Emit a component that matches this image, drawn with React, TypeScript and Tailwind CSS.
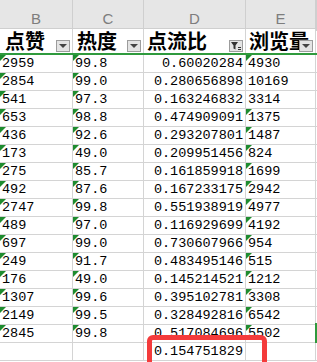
const rows: { b: string; c: string; d: string; e: string; eMark: boolean }[] = [
  { b: "2959", c: "99.8", d: "0.60020284", e: "4930", eMark: true },
  { b: "2854", c: "99.0", d: "0.280656898", e: "10169", eMark: false },
  { b: "541", c: "97.3", d: "0.163246832", e: "3314", eMark: false },
  { b: "653", c: "98.8", d: "0.474909091", e: "1375", eMark: true },
  { b: "436", c: "92.6", d: "0.293207801", e: "1487", eMark: true },
  { b: "173", c: "49.0", d: "0.209951456", e: "824", eMark: true },
  { b: "275", c: "85.7", d: "0.161859918", e: "1699", eMark: true },
  { b: "492", c: "87.6", d: "0.167233175", e: "2942", eMark: true },
  { b: "2747", c: "99.8", d: "0.551938919", e: "4977", eMark: true },
  { b: "489", c: "97.0", d: "0.116929699", e: "4192", eMark: true },
  { b: "697", c: "99.0", d: "0.730607966", e: "954", eMark: true },
  { b: "249", c: "91.7", d: "0.483495146", e: "515", eMark: true },
  { b: "176", c: "49.0", d: "0.145214521", e: "1212", eMark: true },
  { b: "1307", c: "99.6", d: "0.395102781", e: "3308", eMark: true },
  { b: "2149", c: "99.5", d: "0.328492816", e: "6542", eMark: true },
  { b: "2845", c: "99.8", d: "0.517084696", e: "5502", eMark: true },
];

const grid = "grid grid-cols-[73px_71px_102px_70px_1fr]";
const cell = "relative border-r border-[#d4d4d4] overflow-hidden whitespace-nowrap";
const head = "relative border-r border-[#d4d4d4] whitespace-nowrap flex items-center";
const mono = { fontFamily: '"Liberation Mono", "DejaVu Sans Mono", monospace' };

function Mark() {
  return (
    <span className="absolute left-0 top-0 w-0 h-0 border-t-[6px] border-r-[6px] border-t-[#1e8c2f] border-r-transparent" />
  );
}

function DropBtn() {
  return (
    <span className="absolute right-[2px] bottom-[1px] w-[14px] h-[12px] border border-[#9c9c9c] bg-[#e4e4e4] flex items-center justify-center">
      <span className="w-0 h-0 border-l-[4px] border-r-[4px] border-t-[4px] border-l-transparent border-r-transparent border-t-[#444]" />
    </span>
  );
}

function FilterBtn() {
  return (
    <span className="absolute right-[2px] bottom-[1px] w-[14px] h-[12px] border border-[#9c9c9c] bg-[#e4e4e4] flex items-center justify-center">
      <svg width="12" height="10" viewBox="0 0 12 10">
        <path d="M1 1h7L5.5 4.5V8.5L3.5 7.5V4.5Z" fill="#333" />
        <rect x="8" y="6" width="3" height="1" fill="#333" />
        <rect x="8" y="8" width="3" height="1" fill="#333" />
      </svg>
    </span>
  );
}

export default function App() {
  const cn = "font-semibold text-[20px] leading-[24px] text-black";
  const cjk = { fontFamily: '"Noto Sans CJK SC", "Noto Sans", sans-serif' };
  return (
    <div className="relative w-[317px] h-[362px] overflow-hidden bg-white">
      {/* column letters */}
      <div className={`${grid} h-[29px] bg-[#e6e6e6] border-b border-[#cfcfcf]`}>
        {["B", "C", "D", "E", ""].map((l, i) => (
          <div
            key={i}
            className="border-r border-[#cfcfcf] flex items-center justify-center pt-[8px] text-[15px] text-[#7d7d7d]"
            style={{ fontFamily: '"Liberation Sans", Arial, sans-serif' }}
          >
            {l}
          </div>
        ))}
      </div>

      {/* field header */}
      <div className={`${grid} h-[26px] border-b-2 border-[#2f9a3d]`}>
        <div className={`${head} pl-[5px]`}>
          <span className={cn} style={cjk}>点赞</span>
          <DropBtn />
        </div>
        <div className={`${head} pl-[4px]`}>
          <span className={cn} style={cjk}>热度</span>
          <DropBtn />
        </div>
        <div className={`${head} pl-[3px]`}>
          <span className={cn} style={cjk}>点流比</span>
          <FilterBtn />
        </div>
        <div className={`${head} pl-[3px]`}>
          <span className={cn} style={cjk}>浏览量</span>
          <DropBtn />
        </div>
        <div />
      </div>

      {/* data rows */}
      {rows.map((r) => (
        <div key={r.b + r.e} className={`${grid} h-[18px] border-b border-[#d4d4d4] text-[13.5px] leading-[17px] text-black`} style={mono}>
          <div className={`${cell} pl-[2px]`}>
            <Mark />
            {r.b}
          </div>
          <div className={`${cell} pl-[2px]`}>
            <Mark />
            {r.c}
          </div>
          <div className={`${cell} pr-[2px] text-right`}>{r.d}</div>
          <div className={`${cell} pl-[2px]`}>
            {r.eMark && <Mark />}
            {r.e}
          </div>
          <div />
        </div>
      ))}

      {/* total row */}
      <div className={`${grid} h-[18px] border-b border-[#d4d4d4] text-[13.5px] leading-[17px] text-black`} style={mono}>
        <div className={cell} />
        <div className={cell} />
        <div className={`${cell} pr-[2px] text-right`}>0.154751829</div>
        <div className={cell} />
        <div />
      </div>

      {/* hand-drawn highlight */}
      <div className="absolute left-[147px] top-[335px] w-[120px] h-[40px] border-[5px] border-[#f43b3b] rounded-[6px]" />

      {/* side marker */}
      <div className="absolute left-[315px] top-[323px] w-[2px] h-[20px] bg-[#2f9a3d]" />
    </div>
  );
}
